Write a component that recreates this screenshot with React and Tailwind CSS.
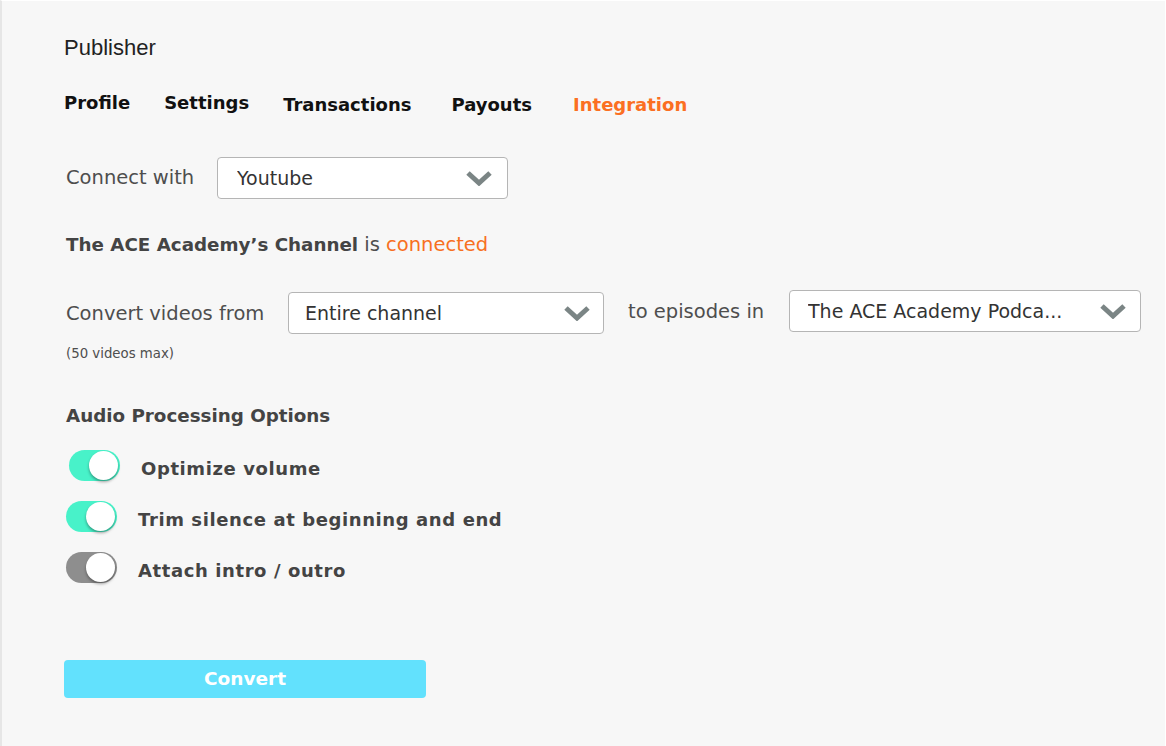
import React from "react";

const Chevron = () => (
  <svg width="26" height="16" viewBox="0 0 26 16" className="shrink-0">
    <path d="M2 3 L13 13 L24 3" fill="none" stroke="#7b8585" strokeWidth="5" strokeLinejoin="miter" />
  </svg>
);

const Select = ({ value, className }) => (
  <div className={`flex items-center justify-between bg-white border border-[#b5b5b5] rounded-[4px] text-[19px] ${className}`}>
    <span className="truncate">{value}</span>
    <Chevron />
  </div>
);

const Toggle = ({ on, className = "" }) => (
  <div className={`relative shrink-0 w-[51px] h-[31px] rounded-full ${on ? "bg-[#48f2c9]" : "bg-[#8e8e8e]"} ${className}`}>
    <div className="absolute right-[2px] top-[1px] w-[29px] h-[29px] rounded-full bg-white shadow-[0_2px_3px_rgba(0,0,0,0.35)]" />
  </div>
);

export default function App() {
  return (
    <div
      className="w-[1166px] h-[746px] bg-[#f7f7f7] border-l-2 border-l-[#e6e6e6] border-t border-t-white border-r border-r-white text-[#4a4a4a] overflow-hidden"
      style={{ fontFamily: '"DejaVu Sans", Verdana, sans-serif' }}
    >
      <div className="pl-[62px] pt-[30px]">
        <div className="h-[33px] leading-[33px] text-[22px] text-[#222]" style={{ fontFamily: '"Liberation Sans", Arial, sans-serif' }}>
          Publisher
        </div>
        <div className="flex items-center mt-[26px] h-[28px] text-[18px] font-bold text-[#111]">
          <span className="mb-[3px]">Profile</span>
          <span className="ml-[34px] mb-[3px]">Settings</span>
          <span className="ml-[34px] mt-[1px]">Transactions</span>
          <span className="ml-[40px] mt-[1px]">Payouts</span>
          <span className="ml-[41px] mt-[1px] text-[#fb6f22]">Integration</span>
        </div>

        <div className="flex items-center mt-[39px] h-[42px] text-[19.5px]">
          <span className="ml-[2px] w-[151px] text-[#4e4e4e]">Connect with</span>
          <Select value="Youtube" className="w-[291px] h-[42px] pl-[19px] pr-[15px] text-[#333]" />
        </div>

        <div className="mt-[32px] ml-[2px] h-[27px] leading-[27px] text-[18.3px]">
          <span className="font-bold text-[#444]">The ACE Academy’s Channel</span>
          <span className="text-[#4e4e4e] font-normal text-[19.5px]"> is </span>
          <span className="text-[#f7701f] font-normal text-[19.5px]">connected</span>
        </div>

        <div className="flex items-start mt-[32px] text-[19.5px] leading-[29px]">
          <span className="ml-[2px] mt-[9px] w-[222px] text-[#4e4e4e]">Convert videos from</span>
          <Select value="Entire channel" className="mt-[2px] w-[316px] h-[42px] pl-[16px] pr-[13px] text-[#333]" />
          <span className="ml-[24px] mt-[7px] w-[161px] text-[#4e4e4e]">to episodes in</span>
          <Select value="The ACE Academy Podca..." className="w-[352px] h-[42px] pl-[18px] pr-[14px] text-[#333]" />
        </div>
        <div className="mt-[10px] ml-[2px] h-[20px] leading-[20px] text-[13.3px] text-[#4e4e4e]">(50 videos max)</div>

        <div className="mt-[38px] ml-[2px] h-[27px] leading-[27px] text-[18.3px] font-bold text-[#444]">Audio Processing Options</div>

        <div className="mt-[21px] flex flex-col gap-[20px] text-[18px] font-bold text-[#444] tracking-[0.6px]">
          <div className="flex items-center h-[31px]">
            <Toggle on className="ml-[5px]" />
            <span className="ml-[21px] mt-[6px] leading-[25px]">Optimize volume</span>
          </div>
          <div className="flex items-center h-[31px]">
            <Toggle on className="ml-[2px]" />
            <span className="ml-[21px] mt-[6px] leading-[25px]">Trim silence at beginning and end</span>
          </div>
          <div className="flex items-center h-[31px]">
            <Toggle className="ml-[2px]" />
            <span className="ml-[21px] mt-[6px] leading-[25px]">Attach intro / outro</span>
          </div>
        </div>

        <button className="mt-[77px] w-[362px] h-[38px] rounded-[4px] bg-[#62e1fd] text-white text-[18.5px] font-bold flex items-center justify-center">
          Convert
        </button>
      </div>
    </div>
  );
}
